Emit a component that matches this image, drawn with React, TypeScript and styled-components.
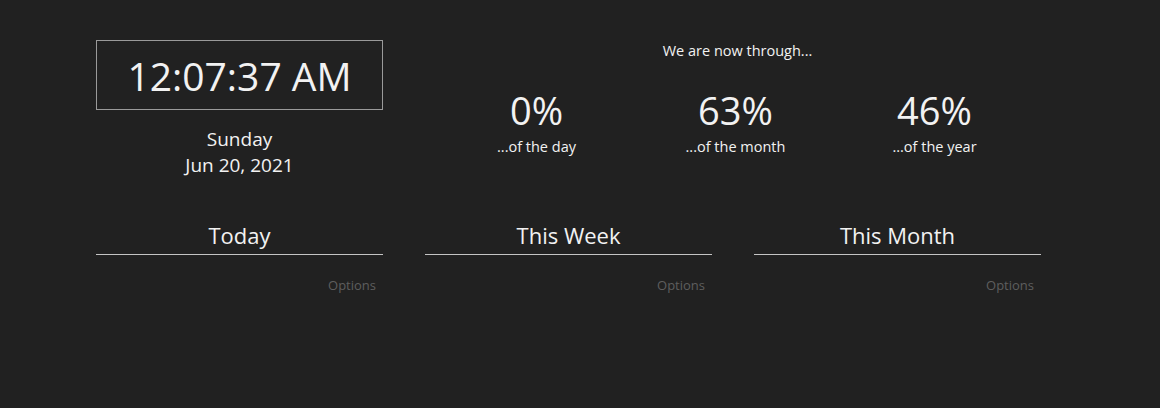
import styled, { createGlobalStyle } from 'styled-components'

const GlobalStyle = createGlobalStyle`
	html, body {
		margin: 0;
		padding: 0;
		background: #212121;
	}
	body {
		font-family: 'Open Sans', 'Noto Sans', sans-serif;
		color: #f2f2f2;
	}
`

const Page = styled.div`
	width: 1160px;
	height: 408px;
	box-sizing: border-box;
	padding: 40px 0 0 96px;
	display: grid;
	grid-template-columns: repeat(3, 287px);
	column-gap: 42px;
	align-content: start;
`

const ClockColumn = styled.div`
	display: flex;
	flex-direction: column;
	align-items: stretch;
`

const ClockBox = styled.div`
	height: 70px;
	box-sizing: border-box;
	border: 1px solid #9a9a9a;
	display: flex;
	align-items: center;
	justify-content: center;
	font-size: 39px;
	line-height: 1;
`

const DateText = styled.div`
	margin-top: 16px;
	text-align: center;
	font-size: 19px;
	line-height: 26px;
`

const ProgressArea = styled.div`
	grid-column: 2 / 4;
	padding-left: 12px;
	display: grid;
	grid-template-columns: repeat(3, 199px);
	align-content: start;
`

const Intro = styled.div`
	grid-column: 1 / 4;
	text-align: center;
	font-size: 14.5px;
	line-height: 22px;
	padding-left: 4px;
`

const Stat = styled.div`
	margin-top: 26px;
	text-align: center;
`

const Percent = styled.div`
	font-size: 38px;
	line-height: 44px;
`

const StatLabel = styled.div`
	margin-top: 5px;
	font-size: 14.5px;
	line-height: 20px;
`

const Section = styled.section`
	margin-top: 42px;
`

const SectionTitle = styled.h2`
	margin: 0;
	padding-bottom: 4px;
	border-bottom: 1px solid #c4c4c4;
	text-align: center;
	font-weight: 400;
	font-size: 22px;
	line-height: 30px;
`

const OptionsLink = styled.div`
	margin-top: 21px;
	padding-right: 7px;
	text-align: right;
	font-size: 13px;
	line-height: 18px;
	color: #5e5e5e;
`

const stats = [
	{ value: '0%', label: '...of the day' },
	{ value: '63%', label: '...of the month' },
	{ value: '46%', label: '...of the year' },
]

const sections = ['Today', 'This Week', 'This Month']

export default function App() {
	return (
		<>
			<GlobalStyle />
			<Page>
				<ClockColumn>
					<ClockBox>12:07:37 AM</ClockBox>
					<DateText>
						Sunday
						<br />
						Jun 20, 2021
					</DateText>
				</ClockColumn>
				<ProgressArea>
					<Intro>We are now through...</Intro>
					{stats.map(s => (
						<Stat key={s.label}>
							<Percent>{s.value}</Percent>
							<StatLabel>{s.label}</StatLabel>
						</Stat>
					))}
				</ProgressArea>
				{sections.map(title => (
					<Section key={title}>
						<SectionTitle>{title}</SectionTitle>
						<OptionsLink>Options</OptionsLink>
					</Section>
				))}
			</Page>
		</>
	)
}
